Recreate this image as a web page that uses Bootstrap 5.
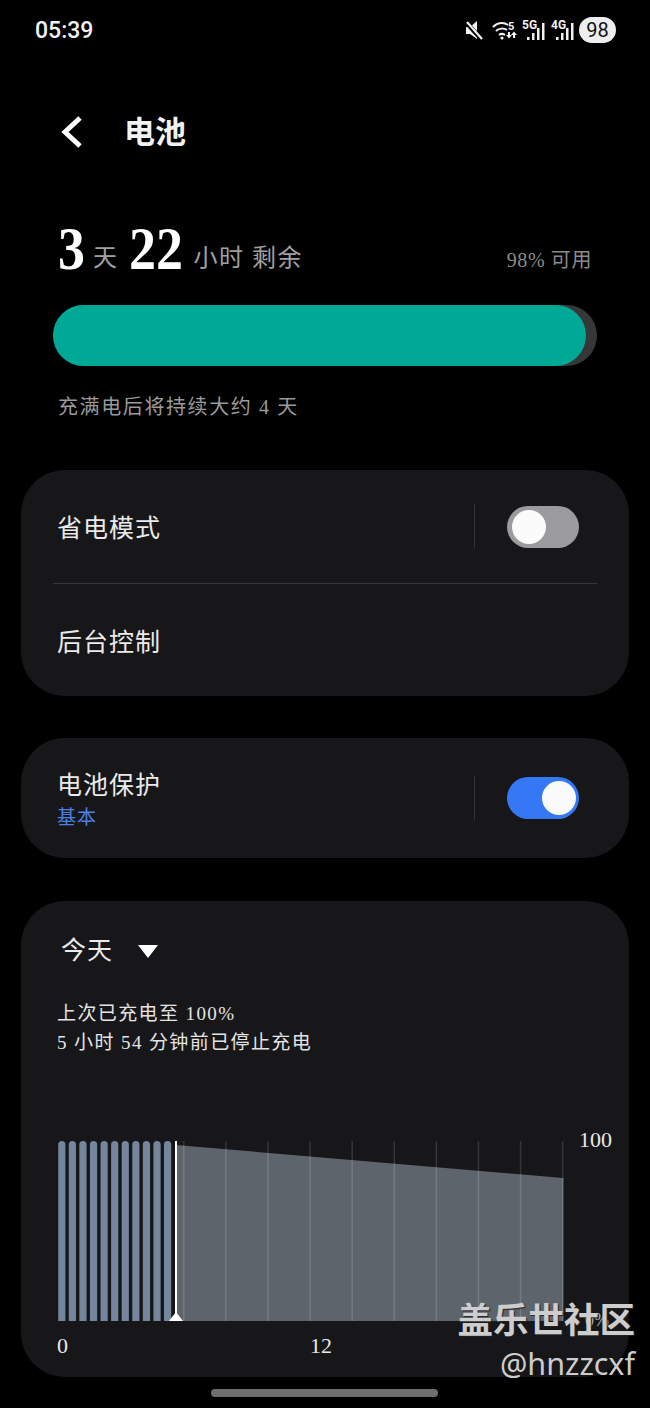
<!DOCTYPE html>
<html lang="zh">
<head>
  <meta charset="UTF-8">
  <meta name="viewport" content="width=device-width, initial-scale=1.0">
  <title>电池</title>
  <link href="https://cdn.jsdelivr.net/npm/bootstrap@5.3.0/dist/css/bootstrap.min.css" rel="stylesheet">
  <style>
    html, body { background: #000; }
    body {
      width: 650px; height: 1408px; overflow: hidden; position: relative;
      font-family: "Liberation Serif", "Noto Sans CJK SC", serif;
      color: #e6e6e6;
    }
    .status-bar { height: 60px; padding: 0 34px 0 35px; }
    .clock { font: 500 23px Roboto, sans-serif; color: #f2f2f2; }
    .batt-pill {
      width: 37px; height: 26px; border-radius: 13px; background: #eee; color: #111;
      font: 400 20px/26px Roboto, sans-serif; text-align: center; margin-left: 4px;
    }
    .title-row { height: 64px; margin-top: 40px; padding-left: 60px; }
    .title-text { font-size: 31px; font-weight: 700; color: #f2f2f2; margin-left: 40px; line-height: 1; }
    .summary { height: 60px; margin-top: 54px; padding: 0 58px 0 58px; }
    .big-num {
      display: inline-block; font-size: 62px; font-weight: 700; color: #fff; line-height: 60px;
      white-space: nowrap; transform: scaleX(.87); transform-origin: left center;
    }
    .digit-1 { width: 27px; }
    .digit-2 { width: 54px; }
    .gap-num { margin-left: 10px; }
    .gap-unit { margin-left: 11px; }
    .unit { font-size: 24px; color: #a0a0a0; line-height: 1; letter-spacing: 1.5px; }
    .avail { font-size: 20px; color: #8b8b8b; letter-spacing: .6px; line-height: 1; padding-bottom: 3px; }
    .batt-track { height: 61px; margin: 27px 53px 0; border-radius: 31px; background: #37373a; }
    .batt-fill { width: 533px; height: 61px; border-radius: 31px; background: #00a896; }
    .note { font-size: 20px; color: #9a9a9a; letter-spacing: 1.6px; margin: 27px 0 0 58px; line-height: 28px; }
    .panel { margin: 0 21px; background: #17171a; border-radius: 44px; }
    .panel-a { margin-top: 49px; height: 226px; }
    .panel-b { margin-top: 42px; height: 120px; }
    .panel-c { margin-top: 43px; height: 476px; padding: 0 0 0 36px; }
    .pane-row { padding: 0 50px 0 36px; }
    .row-a1 { height: 113px; }
    .row-a2 { height: 113px; }
    .row-rule { height: 1px; background: #37373b; margin: 0 32px; }
    .item-label { font-size: 25px; letter-spacing: 1px; line-height: 32px; color: #ebebeb; }
    .sub-label { font-size: 19px; color: #4d80e6; letter-spacing: 1px; line-height: 32px; }
    .label-stack { padding-top: 8px; }
    .v-rule { width: 1px; height: 45px; background: #333337; margin-right: 32px; }
    .toggle-off, .toggle-on { width: 72px; height: 42px; border-radius: 21px; padding: 4px; }
    .toggle-off { background: #9b9b9d; padding-left: 5px; }
    .toggle-on { background: #3478f6; padding-right: 3px; }
    .knob { width: 34px; height: 34px; border-radius: 50%; background: #fbfbfb; }
    .today { font-size: 25px; line-height: 32px; padding: 34px 0 0 4px; color: #ebebeb; letter-spacing: 1px; }
    .charge-info { font-size: 19px; line-height: 28.5px; margin-top: 33px; color: #e4e4e4; letter-spacing: 1.4px; }
    .chart-wrap { margin-top: 83px; }
    .chart-svg { display: block; }
    .y-labels { height: 204px; width: 40px; margin-left: 12px; margin-top: -12px; font-size: 22px; color: #e8e8e8; line-height: 24px; }
    .y-zero { color: #b8b8b8; font-size: 18px; padding-left: 6px; }
    .x-labels { width: 510px; font-size: 22px; line-height: 24px; margin-top: 2px; color: #e8e8e8; }
    .x-twelve { margin-left: 242px; }
    .home-bar { position: absolute; left: 211px; top: 1389px; width: 227px; height: 8px; border-radius: 4px; background: #6e6e6e; }
    .watermark { position: absolute; right: 15px; top: 1296px; text-align: right; color: #cdcdcd; }
    .wm-title { font: 700 35.5px/44px "Noto Sans CJK SC", sans-serif; text-shadow: 1px 1px 1px #222; }
    .wm-handle { font: 400 30.5px/36px "Noto Sans", sans-serif; margin-top: 5px; }
  </style>
</head>
<body>

  <!-- status bar -->
  <div class="status-bar d-flex align-items-center justify-content-between">
    <div class="clock">05:39</div>
    <div class="d-flex align-items-center">
      <svg width="111" height="30" viewBox="0 0 111 30" fill="#f2f2f2">
        <!-- mute -->
        <path d="M2 12h4l7-6v18l-7-5H2z"/>
        <path d="M1 6l17 19" stroke="#000" stroke-width="4.500"/>
        <path d="M3 7l15 17" stroke="#f2f2f2" stroke-width="2.200"/>
        <!-- wifi + 5 -->
        <g fill="none" stroke="#f2f2f2" stroke-width="2">
          <path d="M29 12c5-5 11-5 15-2"/>
          <path d="M32 16c3-3 8-3 11-1"/>
          <path d="M35 20c2-1.500 4-1.500 6 0"/>
        </g>
        <circle cx="38" cy="23" r="1.600"/>
        <text x="44" y="15" font-family="Roboto, sans-serif" font-size="11" font-weight="700">5</text>
        <path d="M44 17h2v3h2l-3 3.500-3-3.500h2zM51 23h-2v-3h-2l3-3.500 3 3.500h-2z"/>
        <!-- 5G signal -->
        <text x="58" y="14" font-family="Roboto, sans-serif" font-size="12" font-weight="700">5G</text>
        <path d="M63 22h2.500v3H63zM68 18h2.500v7H68zM73 13h2.500v12H73zM78 8h2.500v17H78z"/>
        <!-- 4G signal -->
        <text x="87" y="14" font-family="Roboto, sans-serif" font-size="12" font-weight="700">4G</text>
        <path d="M92 22h2.500v3H92zM97 18h2.500v7H97zM102 13h2.500v12H102zM107 8h2.500v17H107z"/>
      </svg>
      <div class="batt-pill">98</div>
    </div>
  </div>

  <!-- title -->
  <div class="title-row d-flex align-items-center">
    <svg width="24" height="34" viewBox="0 0 24 34">
      <path d="M20 3L5 17l15 14" fill="none" stroke="#fff" stroke-width="5"/>
    </svg>
    <div class="title-text">电池</div>
  </div>

  <!-- remaining time -->
  <div class="summary d-flex align-items-end justify-content-between">
    <div class="d-flex align-items-end">
      <span class="big-num digit-1">3</span>
      <span class="unit ms-2 pb-2">天</span>
      <span class="big-num digit-2 gap-num">22</span>
      <span class="unit gap-unit pb-2">小时 剩余</span>
    </div>
    <div class="avail pb-2">98% 可用</div>
  </div>
  <div class="batt-track">
    <div class="batt-fill"></div>
  </div>
  <div class="note">充满电后将持续大约 4 天</div>

  <!-- settings -->
  <div class="panel panel-a">
    <div class="pane-row row-a1 d-flex align-items-center justify-content-between">
      <div class="item-label pt-1">省电模式</div>
      <div class="d-flex align-items-center">
        <div class="v-rule"></div>
        <div class="toggle-off"><div class="knob"></div></div>
      </div>
    </div>
    <div class="row-rule"></div>
    <div class="pane-row row-a2 d-flex align-items-center">
      <div class="item-label pt-1">后台控制</div>
    </div>
  </div>

  <div class="panel panel-b pane-row d-flex align-items-center justify-content-between">
    <div class="label-stack">
      <div class="item-label">电池保护</div>
      <div class="sub-label">基本</div>
    </div>
    <div class="d-flex align-items-center">
      <div class="v-rule"></div>
      <div class="toggle-on d-flex justify-content-end"><div class="knob"></div></div>
    </div>
  </div>

  <!-- usage chart -->
  <div class="panel panel-c">
    <div class="today d-flex align-items-center">
      今天
      <svg class="ms-4" width="22" height="15" viewBox="0 0 22 15"><path d="M1 1h20L11 14z" fill="#fff"/></svg>
    </div>
    <div class="charge-info">
      <div>上次已充电至 100%</div>
      <div>5 小时 54 分钟前已停止充电</div>
    </div>
    <div class="chart-wrap d-flex">
      <svg class="chart-svg" id="chart" width="510" height="182" viewBox="57 1140 510 182"></svg>
      <div class="y-labels d-flex flex-column justify-content-between">
        <div>100</div>
        <div class="y-zero">0%</div>
      </div>
    </div>
    <div class="x-labels d-flex">
      <span>0</span><span class="x-twelve">12</span>
    </div>
  </div>

  <div class="home-bar"></div>

  <div class="watermark">
    <div class="wm-title">盖乐世社区</div>
    <div class="wm-handle">@hnzzcxf</div>
  </div>

  <script>
    var svgNS = 'http://www.w3.org/2000/svg';
    var chart = document.getElementById('chart');

    function add(tag, attrs) {
      var el = document.createElementNS(svgNS, tag);
      for (var k in attrs) el.setAttribute(k, attrs[k]);
      chart.appendChild(el);
    }

    add('polygon', { points: '176,1145 563,1178 563,1321 176,1321', fill: '#5d646c' });

    for (var i = 0; i < 10; i++) {
      var x = 183.5 + i * 42.1;
      var y = 1145 + (x - 176) * 33 / 387;
      add('rect', { x: x - 0.5, y: 1141, width: 1.5, height: y - 1141, fill: '#36363a' });
      add('rect', { x: x - 0.5, y: y, width: 1.5, height: 1321 - y, fill: '#747a81' });
    }

    for (var b = 0; b < 11; b++) {
      add('rect', { x: 58.2 + b * 10.58, y: 1141, width: 7.2, height: 190, rx: 3.6, fill: '#74859c' });
    }
    // clip rounded bottoms of the bars
    add('rect', { x: 57, y: 1321, width: 120, height: 14, fill: '#17171a' });

    add('rect', { x: 175, y: 1141, width: 2, height: 180, fill: '#fff' });
    add('polygon', { points: '176,1312 183,1321 169,1321', fill: '#fff' });
  </script>
</body>
</html>
